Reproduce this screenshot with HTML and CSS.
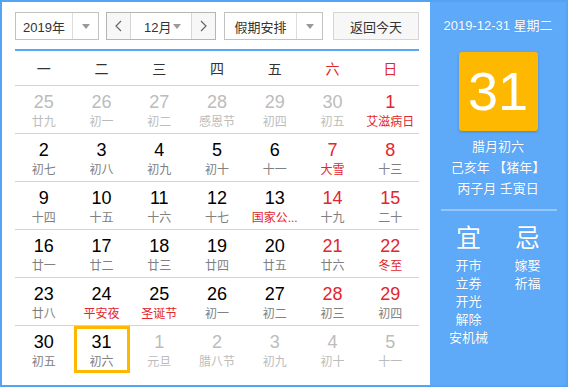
FILE: index.html
```html
<!DOCTYPE html>
<html>
<head>
<meta charset="utf-8">
<link rel="stylesheet" href="styles.css">
</head>
<body>
<div class="cal">
  <div class="main">
    <div class="controls">
      <div class="select year">
        <span class="sel-text">2019年</span>
        <span class="sel-arrow"><i class="tri"></i></span>
      </div>
      <div class="month-group">
        <span class="nav prev"><svg width="7" height="12" viewBox="0 0 7 12"><polyline points="6,1 1,6 6,11" fill="none" stroke="#666" stroke-width="1.2"/></svg></span>
        <span class="month"><span class="sel-text">12月</span><i class="tri"></i></span>
        <span class="nav next"><svg width="7" height="12" viewBox="0 0 7 12"><polyline points="1,1 6,6 1,11" fill="none" stroke="#666" stroke-width="1.2"/></svg></span>
      </div>
      <div class="select holiday">
        <span class="sel-text">假期安排</span>
        <span class="sel-arrow"><i class="tri"></i></span>
      </div>
      <div class="today-btn">返回今天</div>
    </div>
    <div class="weekdays">
      <span>一</span><span>二</span><span>三</span><span>四</span><span>五</span><span class="wk">六</span><span class="wk">日</span>
    </div>
    <div class="grid">
      <div class="row">
        <div class="cell other"><b>25</b><em>廿九</em></div>
        <div class="cell other"><b>26</b><em>初一</em></div>
        <div class="cell other"><b>27</b><em>初二</em></div>
        <div class="cell other"><b>28</b><em>感恩节</em></div>
        <div class="cell other"><b>29</b><em>初四</em></div>
        <div class="cell other"><b>30</b><em>初五</em></div>
        <div class="cell we fest"><b>1</b><em>艾滋病日</em></div>
      </div>
      <div class="row">
        <div class="cell"><b>2</b><em>初七</em></div>
        <div class="cell"><b>3</b><em>初八</em></div>
        <div class="cell"><b>4</b><em>初九</em></div>
        <div class="cell"><b>5</b><em>初十</em></div>
        <div class="cell"><b>6</b><em>十一</em></div>
        <div class="cell we fest"><b>7</b><em>大雪</em></div>
        <div class="cell we"><b>8</b><em>十三</em></div>
      </div>
      <div class="row">
        <div class="cell"><b>9</b><em>十四</em></div>
        <div class="cell"><b>10</b><em>十五</em></div>
        <div class="cell"><b>11</b><em>十六</em></div>
        <div class="cell"><b>12</b><em>十七</em></div>
        <div class="cell fest"><b>13</b><em>国家公...</em></div>
        <div class="cell we"><b>14</b><em>十九</em></div>
        <div class="cell we"><b>15</b><em>二十</em></div>
      </div>
      <div class="row">
        <div class="cell"><b>16</b><em>廿一</em></div>
        <div class="cell"><b>17</b><em>廿二</em></div>
        <div class="cell"><b>18</b><em>廿三</em></div>
        <div class="cell"><b>19</b><em>廿四</em></div>
        <div class="cell"><b>20</b><em>廿五</em></div>
        <div class="cell we"><b>21</b><em>廿六</em></div>
        <div class="cell we fest"><b>22</b><em>冬至</em></div>
      </div>
      <div class="row">
        <div class="cell"><b>23</b><em>廿八</em></div>
        <div class="cell fest"><b>24</b><em>平安夜</em></div>
        <div class="cell fest"><b>25</b><em>圣诞节</em></div>
        <div class="cell"><b>26</b><em>初一</em></div>
        <div class="cell"><b>27</b><em>初二</em></div>
        <div class="cell we"><b>28</b><em>初三</em></div>
        <div class="cell we"><b>29</b><em>初四</em></div>
      </div>
      <div class="row last">
        <div class="cell"><b>30</b><em>初五</em></div>
        <div class="cell today"><b>31</b><em>初六</em></div>
        <div class="cell other"><b>1</b><em>元旦</em></div>
        <div class="cell other"><b>2</b><em>腊八节</em></div>
        <div class="cell other"><b>3</b><em>初九</em></div>
        <div class="cell other"><b>4</b><em>初十</em></div>
        <div class="cell other"><b>5</b><em>十一</em></div>
      </div>
    </div>
  </div>
  <div class="side">
    <div class="side-date">2019-12-31 星期二</div>
    <div class="big-day">31</div>
    <div class="lunar-info">
      <div>腊月初六</div>
      <div>己亥年 【猪年】</div>
      <div>丙子月 壬寅日</div>
    </div>
    <div class="sep"></div>
    <div class="yiji">
      <div class="col">
        <div class="head">宜</div>
        <div>开市</div><div>立券</div><div>开光</div><div>解除</div><div>安机械</div>
      </div>
      <div class="col">
        <div class="head">忌</div>
        <div>嫁娶</div><div>祈福</div>
      </div>
    </div>
  </div>
</div>
</body>
</html>
```
FILE: styles.css
```css
html, body {
  margin: 0;
  padding: 0;
  background: #fff;
}
body {
  font-family: "Liberation Sans", "Noto Sans CJK SC", sans-serif;
  color: #333;
}
.cal {
  box-sizing: border-box;
  width: 568px;
  height: 387px;
  border: 2px solid #55a3f4;
  display: flex;
}
.main {
  width: 428px;
  box-sizing: border-box;
  padding: 10px 11px 0 13px;
}
.controls {
  display: flex;
  height: 28px;
  font-size: 13px;
}
.select {
  box-sizing: border-box;
  height: 28px;
  border: 1px solid #c2c2c2;
  display: flex;
  align-items: center;
}
.year { width: 84px; }
.holiday { width: 99px; margin-left: 8px; }
.sel-text {
  flex: 1;
  text-align: center;
  color: #333;
}
.sel-arrow {
  width: 25px;
  height: 26px;
  border-left: 1px solid #dcdcdc;
  display: flex;
  align-items: center;
  justify-content: center;
}
.tri {
  width: 0;
  height: 0;
  border-left: 4px solid transparent;
  border-right: 4px solid transparent;
  border-top: 5px solid #9a9a9a;
}
.month-group {
  box-sizing: border-box;
  width: 110px;
  height: 28px;
  margin-left: 7px;
  border: 1px solid #b5b5b5;
  display: flex;
}
.nav {
  width: 23px;
  background: #f7f7f7;
  display: flex;
  align-items: center;
  justify-content: center;
}
.prev { border-right: 1px solid #d6d6d6; }
.next { border-left: 1px solid #d6d6d6; width: 23px; }
.month {
  flex: 1;
  display: flex;
  align-items: center;
  padding: 0 10px 0 12px;
}
.month .sel-text { text-align: left; padding-left: 1px; }
.today-btn {
  box-sizing: border-box;
  margin-left: 10px;
  width: 86px;
  height: 28px;
  border: 1px solid #d6d6d6;
  background: #f7f7f7;
  display: flex;
  align-items: center;
  justify-content: center;
  color: #333;
}
.weekdays {
  margin-top: 9px;
  border-top: 2px solid #5aa7f8;
  height: 34px;
  border-bottom: 1px solid #d3d3d3;
  display: grid;
  grid-template-columns: repeat(7, 1fr);
  align-items: center;
  text-align: center;
  font-size: 14px;
  color: #333;
}
.weekdays .wk { color: #e0282e; }
.row {
  display: grid;
  grid-template-columns: repeat(7, 1fr);
  height: 47px;
  border-bottom: 1px solid #d3d3d3;
}
.row.last { border-bottom: none; }
.cell {
  display: flex;
  flex-direction: column;
  align-items: center;
  padding-top: 6px;
  box-sizing: border-box;
}
.cell b {
  font-weight: normal;
  font-size: 18px;
  line-height: 20px;
  color: #000;
}
.cell em {
  font-style: normal;
  font-size: 12px;
  line-height: 16px;
  margin-top: 2px;
  color: #808080;
  white-space: nowrap;
}
.cell.we b { color: #e2262d; }
.cell.fest em { color: #e2262d; }
.cell.other b { color: #bcbcbc; }
.cell.other em { color: #bcbcbc; }
.cell.today {
  width: 56px;
  justify-self: center;
  border: 3px solid #ffb800;
  padding-top: 3px;
}
.side {
  flex: 1;
  background: #5eaaf8;
  color: #fff;
  display: flex;
  flex-direction: column;
  align-items: center;
  text-shadow: 0 0 1px rgba(0, 60, 140, 0.25);
}
.side-date {
  margin-top: 14px;
  font-size: 13px;
  line-height: 20px;
}
.big-day {
  margin-top: 16px;
  width: 79px;
  height: 79px;
  background: #ffb800;
  border-radius: 3px;
  box-shadow: 0 1px 3px rgba(0, 0, 0, 0.2);
  font-size: 54px;
  line-height: 79px;
  text-align: center;
  text-shadow: none;
}
.lunar-info {
  margin-top: 5px;
  font-size: 13px;
  line-height: 21px;
  text-align: center;
}
.sep {
  margin-top: 10px;
  align-self: stretch;
  margin-left: 11px;
  margin-right: 9px;
  height: 2px;
  background: rgba(255, 255, 255, 0.35);
}
.yiji {
  display: flex;
  margin-top: 12px;
}
.col {
  width: 59px;
  text-align: center;
  font-size: 13px;
  line-height: 18px;
}
.col .head {
  font-size: 25px;
  line-height: 30px;
  margin-bottom: 4px;
}
```
